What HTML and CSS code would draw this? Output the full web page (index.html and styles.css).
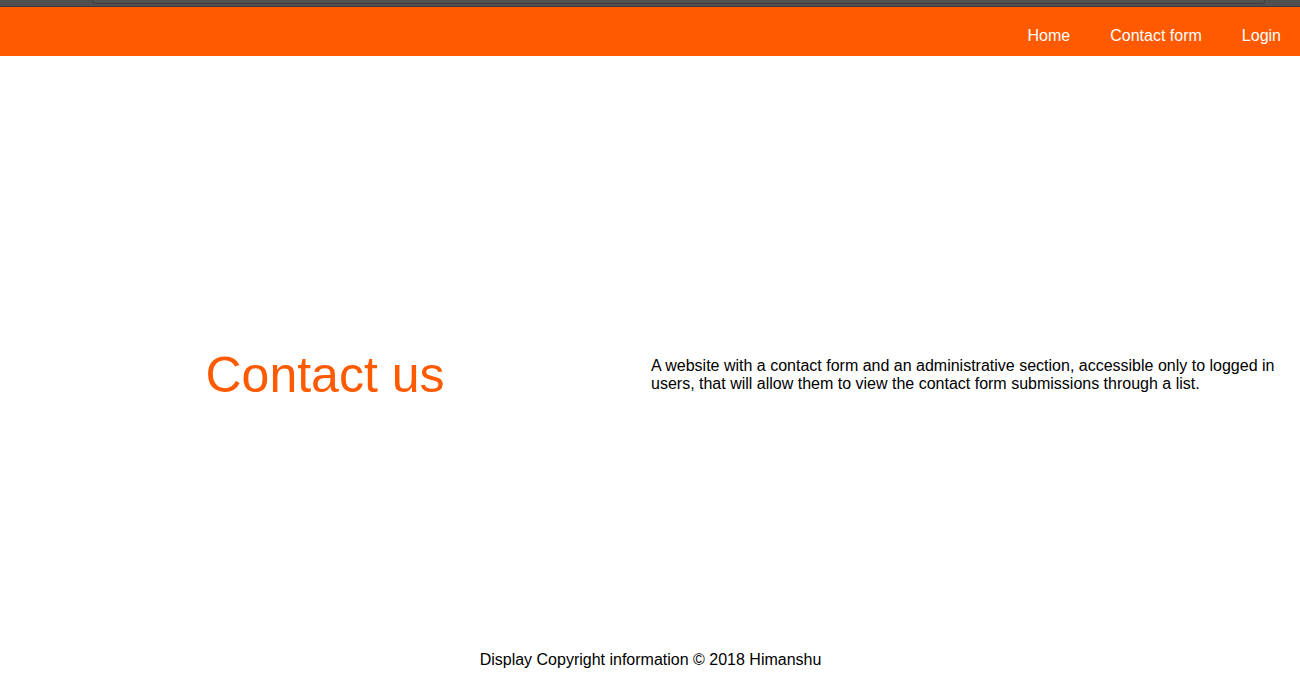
FILE: index.html
```html
<!DOCTYPE html>
<html>
<head>
<meta charset="utf-8">
<link rel="stylesheet" href="styles.css">
</head>
<body>
<div class="chrome"><div class="chrome-tab"></div></div>
<header class="topbar">
  <nav class="nav">
    <a href="#">Home</a>
    <a href="#">Contact form</a>
    <a href="#">Login</a>
  </nav>
</header>
<main class="main">
  <div class="col col-left"><h1 class="title">Contact us</h1></div>
  <div class="col col-right"><p class="desc">A website with a contact form and an administrative section, accessible only to logged in users, that will allow them to view the contact form submissions through a list.</p></div>
</main>
<footer class="footer">Display Copyright information © 2018 Himanshu</footer>
</body>
</html>
```
FILE: styles.css
```css
* { box-sizing: border-box; }
html, body { margin: 0; padding: 0; }
body {
  font-family: "Liberation Sans", Arial, sans-serif;
  font-size: 16px;
  color: #000;
  background: #fff;
  width: 1300px;
  height: 684px;
  overflow: hidden;
}
.chrome {
  height: 7px;
  background: #505050;
  border-bottom: 1px solid #3a3a3a;
  padding: 0 35px 0 92px;
}
.chrome-tab {
  height: 4px;
  border: 1px solid #3e3e3e;
  border-top: none;
  border-radius: 0 0 3px 3px;
  background: #525252;
}
.topbar {
  height: 49px;
  background: #ff5a00;
  display: flex;
  justify-content: flex-end;
}
.nav {
  display: flex;
  gap: 40px;
  padding: 20px 19px 0 0;
}
.nav a {
  color: #fff;
  text-decoration: none;
  font-size: 16px;
  line-height: 18px;
}
.main {
  height: 590px;
  padding-top: 48px;
  display: flex;
  align-items: center;
}
.col { width: 650px; }
.col-left { text-align: center; }
.title {
  margin: 0;
  font-weight: normal;
  font-size: 50px;
  line-height: 57px;
  color: #ff5a00;
}
.col-right { padding-right: 10px; }
.desc {
  margin: 0 0 0 1px;
  font-size: 16px;
  line-height: 18px;
}
.footer {
  text-align: center;
  padding: 5px 0 0 1px;
  line-height: 18px;
}
```
